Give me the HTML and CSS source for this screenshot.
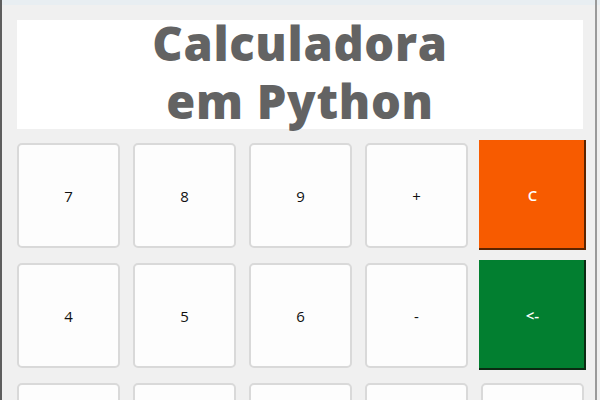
FILE: index.html
```html
<!DOCTYPE html>
<html lang="pt">
<head>
<meta charset="utf-8">
<title>Calculadora em Python</title>
<link rel="stylesheet" href="styles.css">
</head>
<body>
<div class="window">
  <div class="titlebar"></div>
  <div class="content">
    <div class="display"><div class="display-text">Calculadora<br>em Python</div></div>
    <div class="keys">
      <button class="key">7</button>
      <button class="key">8</button>
      <button class="key">9</button>
      <button class="key">+</button>
      <button class="key key-clear">C</button>
      <button class="key">4</button>
      <button class="key">5</button>
      <button class="key">6</button>
      <button class="key">-</button>
      <button class="key key-back">&lt;-</button>
      <button class="key">1</button>
      <button class="key">2</button>
      <button class="key">3</button>
      <button class="key">*</button>
      <button class="key">/</button>
    </div>
  </div>
</div>
</body>
</html>
```
FILE: styles.css
```css
html, body {
  margin: 0;
  padding: 0;
  background: #f0f0f0;
  overflow: hidden;
}
.window {
  width: 600px;
  height: 400px;
  box-sizing: border-box;
  border-left: 2px solid #5e5e5e;
  display: flex;
  flex-direction: column;
  background: #f0f0f0;
  position: relative;
  overflow: hidden;
}
.window::after {
  content: "";
  position: absolute;
  top: 0;
  bottom: 0;
  right: 3px;
  width: 2px;
  background: #9a9a9a;
}
.titlebar {
  height: 5px;
  background: #e8eef2;
  flex: none;
}
.content {
  padding: 15px 0 0 13px;
  display: flex;
  flex-direction: column;
}
.display {
  margin-left: 2px;
  width: 566px;
  height: 109px;
  background: #ffffff;
  color: #636363;
  font-family: "Open Sans", "DejaVu Sans", sans-serif;
  font-weight: 800;
  font-size: 47px;
  line-height: 58px;
  letter-spacing: 0.7px;
  text-align: center;
  display: flex;
  flex-direction: column;
}
.display-text {
  margin-top: -6px;
}
.keys {
  margin-top: 11px;
  display: grid;
  grid-template-columns: repeat(5, 107px);
  grid-auto-rows: 110px;
  column-gap: 9px;
  row-gap: 10px;
}
.key {
  margin: 3px 2px 2px 2px;
  background: #fdfdfd;
  border: 2px solid #d9d9d9;
  border-radius: 5px;
  font-family: "Open Sans", "Noto Sans", sans-serif;
  font-size: 15px;
  color: #111;
  padding: 0;
}
.key-clear, .key-back {
  margin: 0;
  border: none;
  border-radius: 0;
  color: #ffffff;
  font-size: 15px;
  font-weight: 600;
}
.key-clear {
  background: #f75b00;
  box-shadow: inset -2px -2px 0 #5b2400;
}
.key-back {
  background: #027f30;
  box-shadow: inset -2px -2px 0 #0b2a12;
}
```
